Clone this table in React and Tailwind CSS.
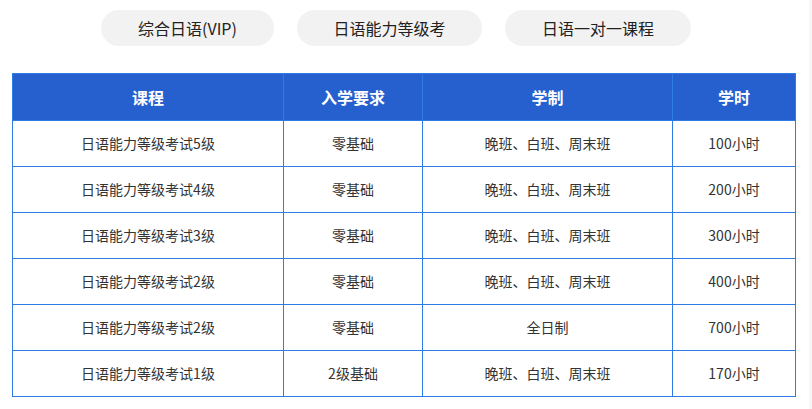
import React from "react";

const tabs = [
  { label: "综合日语(VIP)", w: "w-[173px]" },
  { label: "日语能力等级考", w: "w-[185px]" },
  { label: "日语一对一课程", w: "w-[186px]" },
];

const rows = [
  ["日语能力等级考试5级", "零基础", "晚班、白班、周末班", "100小时"],
  ["日语能力等级考试4级", "零基础", "晚班、白班、周末班", "200小时"],
  ["日语能力等级考试3级", "零基础", "晚班、白班、周末班", "300小时"],
  ["日语能力等级考试2级", "零基础", "晚班、白班、周末班", "400小时"],
  ["日语能力等级考试2级", "零基础", "全日制", "700小时"],
  ["日语能力等级考试1级", "2级基础", "晚班、白班、周末班", "170小时"],
];

export default function App() {
  return (
    <div
      className="relative w-[812px] h-[409px] bg-white overflow-hidden"
      style={{ fontFamily: '"Noto Sans CJK SC", "Noto Sans", sans-serif' }}
    >
      {/* Tabs */}
      <div className="flex gap-[23px] pl-[101px] pt-[10px]">
        {tabs.map((t) => (
          <div
            key={t.label}
            className={`${t.w} h-[36px] rounded-full bg-[#f2f2f2] flex items-center justify-center text-[16px] text-[#222]`}
          >
            {t.label}
          </div>
        ))}
      </div>

      {/* Table */}
      <table className="mt-[27px] ml-[12px] w-[784px] border-collapse text-center text-[14px] text-[#333]">
        <thead>
          <tr className="bg-[#2660cf] text-white font-bold text-[16px] h-[47px]">
            <th className="w-[271px] border border-[#2f7be6]">课程</th>
            <th className="w-[139px] border border-[#2f7be6]">入学要求</th>
            <th className="w-[250px] border border-[#2f7be6]">学制</th>
            <th className="border border-[#2f7be6]">学时</th>
          </tr>
        </thead>
        <tbody>
          {rows.map((r, i) => (
            <tr key={i} className="h-[46px]">
              {r.map((c, j) => (
                <td key={j} className="border border-[#2f7be6]">
                  {c}
                </td>
              ))}
            </tr>
          ))}
        </tbody>
      </table>

      {/* scrollbar track */}
      <div className="absolute top-0 right-0 w-[3px] h-full bg-[#f7f7fa]" />
    </div>
  );
}
